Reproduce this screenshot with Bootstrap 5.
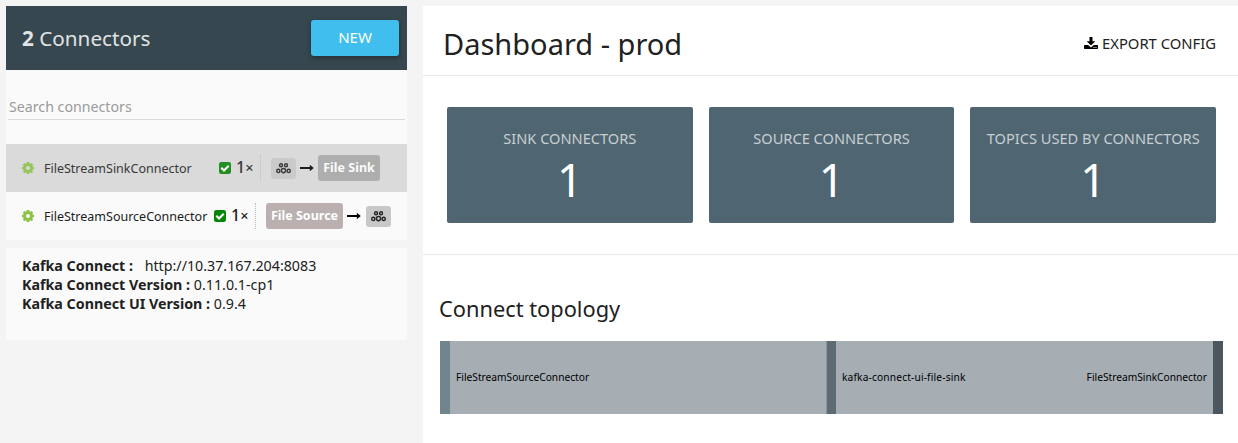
<!DOCTYPE html>
<html lang="en">
<head>
<meta charset="utf-8">
<meta name="viewport" content="width=device-width, initial-scale=1">
<title>Kafka Connect UI</title>
<link href="https://cdn.jsdelivr.net/npm/bootstrap@5.3.0/dist/css/bootstrap.min.css" rel="stylesheet">
<style>
body{background:#f4f4f4;font-family:"Noto Sans","Open Sans",sans-serif;color:#212121;height:443px;overflow:hidden;font-size:14px;line-height:19px}
.shell{height:443px;padding:6px 0 0 6px;gap:16px}
.side{width:401px;gap:8px}
.side-card{background:#fafafa}
.side-head{height:64px;background:#37474f;color:#e1e3e4;padding:0 8px 0 16px}
.side-title{font-size:20.7px;line-height:28px;padding-bottom:1px}
.btn-new{width:88px;height:36px;background:#40bfee;color:#fff;border:0;border-radius:3px;font-size:15px;line-height:20px;padding:0 0 2px;box-shadow:0 2px 5px rgba(0,0,0,.35)}
.btn-new:hover{background:#35b2e0;color:#fff}
.search{height:50px;margin:0 2px;width:397px;border:0;border-bottom:1px solid #dadada;border-radius:0;background:transparent;padding:24px 0 1px 1px;font-size:14.2px;line-height:24px}
.search::placeholder{color:#9b9b9b;opacity:1}
.conn{height:48px;padding-left:16px}
.conn.active-row{background:#dadada}
.active-row>*{opacity:.87}
.conn-name{margin-left:10px;font-size:12.5px;height:19px;white-space:nowrap}
.count{margin-left:5px;font-size:16px;height:22px;line-height:20px;font-weight:500;white-space:nowrap}
.count small{font-size:14.5px}
.flowbox{height:26px;border-left:1px dotted #bbb;padding-left:10px}
.topic{width:25px;height:21px;border-radius:3px;background:#c8c8c8}
.kind{height:26px;border-radius:3px;background:#bab0b0;color:#fff;font-weight:700;font-size:12.5px;line-height:26px;text-align:center;white-space:nowrap}
.info{height:92px;padding:8px 16px;font-size:14.25px}
.info-line{height:19px;white-space:nowrap}
.main-pane{background:#fff;min-width:0}
.main-head{height:70px;border-bottom:1px solid #e8e8e8;padding:0 22px 0 20px}
.page-title{font-size:29px;line-height:40px;font-weight:400;padding-top:6px}
.export{font-size:14.8px;margin-top:6px}
.stats{height:179px;border-bottom:1px solid #e8e8e8;padding:31px 22px 0 24px;gap:16px}
.stat{height:116px;background:#4f6571;border-radius:2px;padding-top:21px;color:#fff;flex:1 1 0;min-width:0}
.stat-label{font-size:14.6px;line-height:20px;color:#c8cfd3;white-space:nowrap}
.stat-num{font-size:45px;line-height:64px}
.topo{padding:40px 15px 0 17px}
.topo-title{font-size:21.8px;line-height:28px;margin:0 0 18px -1px;font-weight:400}
.sankey{height:73px;background:#a6aeb4;color:#000;font-size:10.2px}
.node{width:10px;height:73px;flex-shrink:0}
.node-topic{background:#5d6b73;border:solid #8b969c;border-width:0 0 0 1px}
.topic-label{letter-spacing:.15px}
</style>
</head>
<body>
<svg width="0" height="0" class="d-none" aria-hidden="true">
<symbol id="gear" viewBox="0 0 12 12"><path fill-rule="evenodd" d="M4.800 0h2.400l.4 1.500.6.300L9.600.9l1.600 1.600-.9 1.400.2.600 1.500.300v2.400l-1.500.4-.2.600.9 1.400-1.600 1.600-1.400-.9-.6.2-.4 1.500H4.800l-.4-1.500-.6-.2-1.400.9L.8 9.600l.9-1.400-.2-.6L0 7.200V4.800l1.500-.3.2-.6L.8 2.500 2.400.9l1.400.9.6-.3zM6 4a2 2 0 1 0 0 4 2 2 0 0 0 0-4z"/></symbol>
<symbol id="check" viewBox="0 0 12 12"><rect width="12" height="12" rx="2.200" fill="#078507"/><path d="M2.300 5.800l2.700 2.700 4.700-4.700" fill="none" stroke="#fff" stroke-width="2.100"/></symbol>
<symbol id="topicnodes" viewBox="0 0 15 11"><g fill="none" stroke="#222" stroke-width="1.400"><circle cx="5" cy="2.300" r="1.500"/><circle cx="10" cy="2.300" r="1.500"/><circle cx="2.300" cy="7.900" r="1.600"/><circle cx="7.500" cy="7.600" r="2.100"/><circle cx="12.700" cy="7.900" r="1.600"/></g></symbol>
<symbol id="arrow" viewBox="0 0 14 8"><path d="M0 3h9.800V.8L13.800 4l-4 3.200V5H0z"/></symbol>
<symbol id="download" viewBox="0 0 14 13"><path d="M5.500 0h3v4.300h2.800L7 8.500 2.700 4.300h2.800z"/><path fill-rule="evenodd" d="M.8 8h3.300L7 10.500 9.900 8h3.300q.8 0 .8.8v2.500q0 .7-.8.7H.8q-.8 0-.8-.7V8.800Q0 8 .8 8zm8.700 2v1h1v-1zm2 0v1h1v-1z"/></symbol>
</svg>
<div class="shell d-flex">
  <aside class="side d-flex flex-column flex-shrink-0">
    <section class="side-card" style="height:234px">
      <header class="side-head d-flex align-items-center justify-content-between">
        <div class="side-title"><b>2</b> <span>Connectors</span></div>
        <button class="btn btn-new" type="button">NEW</button>
      </header>
      <input class="search d-block" placeholder="Search connectors" aria-label="Search connectors">
      <div style="height:24px"></div>
      <div class="conn active-row d-flex align-items-center">
        <svg width="12" height="12" fill="#8bc34a"><use href="#gear"/></svg>
        <span class="conn-name" style="width:175px">FileStreamSinkConnector</span>
        <svg width="12" height="12"><use href="#check"/></svg>
        <span class="count" style="width:24px">1<small>×</small></span>
        <div class="flowbox d-flex align-items-center">
          <span class="topic d-flex align-items-center justify-content-center"><svg width="15" height="11"><use href="#topicnodes"/></svg></span>
          <svg class="ms-1 me-1" width="14" height="8"><use href="#arrow"/></svg>
          <span class="kind" style="width:62px;background:#a8a8a8">File Sink</span>
        </div>
      </div>
      <div class="conn d-flex align-items-center">
        <svg width="12" height="12" fill="#8bc34a"><use href="#gear"/></svg>
        <span class="conn-name" style="width:170px">FileStreamSourceConnector</span>
        <svg width="12" height="12"><use href="#check"/></svg>
        <span class="count" style="width:24px">1<small>×</small></span>
        <div class="flowbox d-flex align-items-center">
          <span class="kind" style="width:77px">File Source</span>
          <svg class="ms-1" style="margin-right:5px" width="14" height="8"><use href="#arrow"/></svg>
          <span class="topic d-flex align-items-center justify-content-center"><svg width="15" height="11"><use href="#topicnodes"/></svg></span>
        </div>
      </div>
    </section>
    <section class="side-card info">
      <div class="info-line"><b>Kafka Connect :</b> <span class="ms-2">http://10.37.167.204:8083</span></div>
      <div class="info-line"><b>Kafka Connect Version :</b> <span>0.11.0.1-cp1</span></div>
      <div class="info-line"><b>Kafka Connect UI Version :</b> <span>0.9.4</span></div>
    </section>
  </aside>
  <main class="main-pane flex-grow-1">
    <header class="main-head d-flex align-items-center justify-content-between">
      <h1 class="page-title m-0">Dashboard - prod</h1>
      <a class="export d-flex align-items-center text-reset text-decoration-none" href="#"><svg class="me-1" width="14" height="13"><use href="#download"/></svg><span>EXPORT CONFIG</span></a>
    </header>
    <section class="stats d-flex">
      <div class="stat text-center"><div class="stat-label">SINK CONNECTORS</div><div class="stat-num">1</div></div>
      <div class="stat text-center"><div class="stat-label">SOURCE CONNECTORS</div><div class="stat-num">1</div></div>
      <div class="stat text-center"><div class="stat-label">TOPICS USED BY CONNECTORS</div><div class="stat-num">1</div></div>
    </section>
    <section class="topo">
      <h2 class="topo-title">Connect topology</h2>
      <div class="sankey d-flex align-items-center">
        <div class="node" style="background:#71858e"></div>
        <span class="flex-grow-1" style="padding-left:6px">FileStreamSourceConnector</span>
        <div class="node node-topic"></div>
        <div class="d-flex justify-content-between" style="width:377px;padding:0 6px"><span class="topic-label">kafka-connect-ui-file-sink</span><span>FileStreamSinkConnector</span></div>
        <div class="node" style="background:#4b575e"></div>
      </div>
    </section>
  </main>
</div>
<script src="https://cdn.jsdelivr.net/npm/bootstrap@5.3.0/dist/js/bootstrap.bundle.min.js"></script>
</body>
</html>
